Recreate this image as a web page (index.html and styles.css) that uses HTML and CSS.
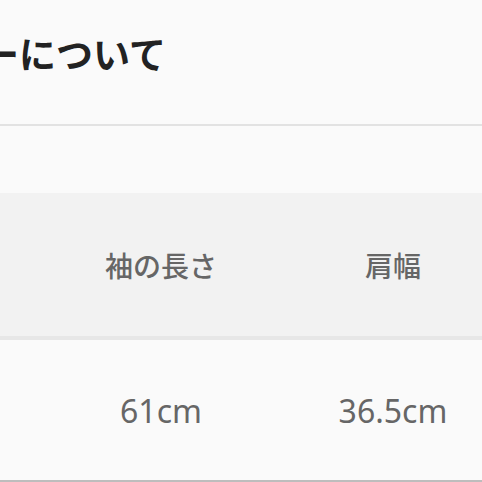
FILE: index.html
```html
<!DOCTYPE html>
<html lang="ja">
<head>
  <meta charset="UTF-8" />
  <meta name="viewport" content="width=device-width, initial-scale=1.0"/>
  <title>サイズについて</title>
  <link rel="stylesheet" href="styles.css">
</head>
<body>
  <div class="section-head">
    <h2 class="section-title">カラーについて</h2>
  </div>

  <table class="size-table">
    <thead>
      <tr>
        <th class="spacer"></th>
        <th>袖の長さ</th>
        <th>肩幅</th>
      </tr>
    </thead>
    <tbody>
      <tr>
        <td class="spacer"></td>
        <td>61cm</td>
        <td>36.5cm</td>
      </tr>
    </tbody>
  </table>
</body>
</html>
```

FILE: styles.css
```css
body {
  margin: 0;
  background: #fafafa;
  font-family: 'Noto Sans', 'Noto Sans CJK JP', sans-serif;
  overflow: hidden;
  width: 482px;
  height: 482px;
}
.section-head {
  height: 124px;
  border-bottom: 2px solid #e2e2e2;
  overflow: hidden;
}
.section-title {
  margin: 0 0 0 -92px;
  padding-top: 28px;
  font-size: 37px;
  line-height: 54px;
  font-weight: 700;
  color: #222;
  white-space: nowrap;
}
.size-table {
  margin-top: 67px;
  border-collapse: collapse;
  table-layout: fixed;
  width: 509px;
}
.size-table th,
.size-table td {
  width: 232px;
  padding: 0;
  text-align: center;
  color: #666;
}
.size-table .spacer {
  width: 45px;
}
.size-table th {
  height: 143px;
  background: #f2f2f2;
  border-bottom: 4px solid #e7e7e7;
  font-size: 28px;
  font-weight: 500;
}
.size-table td {
  height: 140px;
  border-bottom: 2px solid #bdbdbd;
  font-size: 32px;
  font-weight: 400;
}
```
